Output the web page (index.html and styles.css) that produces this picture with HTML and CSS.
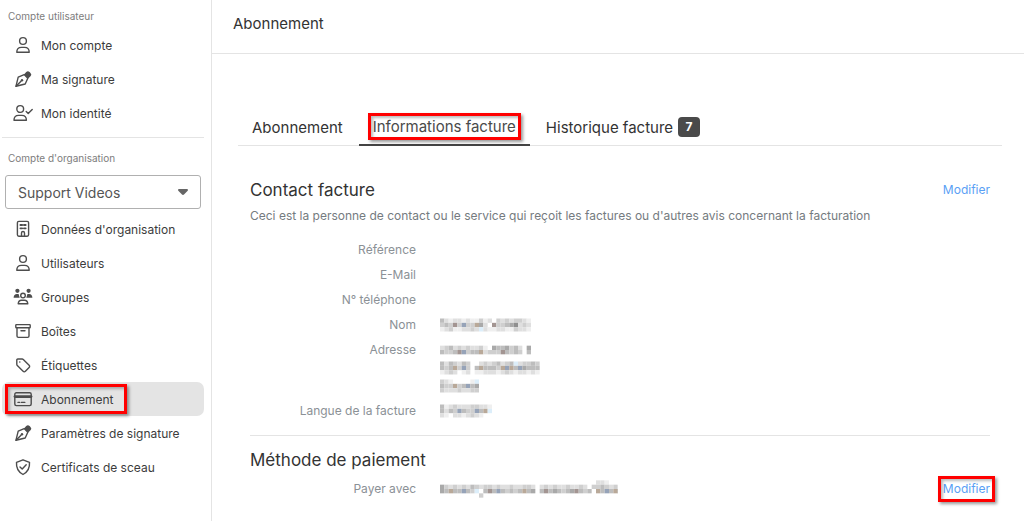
FILE: index.html
```html
<!DOCTYPE html>
<html lang="fr">
<head>
<meta charset="utf-8">
<meta name="viewport" content="width=device-width, initial-scale=1">
<title>Abonnement</title>
<link rel="stylesheet" href="styles.css">
</head>
<body>
<svg class="sprite" aria-hidden="true">
  <symbol id="i-user" viewBox="0 0 20 20"><circle cx="10" cy="6" r="3.4"/><path d="M3.8 17.3c0-3 2-4.9 4.6-4.9h3.2c2.6 0 4.6 1.9 4.6 4.9z"/></symbol>
  <symbol id="i-pen" viewBox="0 0 20 20"><path d="M3 17.2 5.2 8.2 11.2 5.600 14.800 9.200 12.200 15z"/><path d="M3 17.2 8 12.2"/><circle class="solid" cx="9" cy="11.2" r="1.2"/><path class="solid" d="M11 5.400 13.200 3a2.400 2.400 0 0 1 3.400 0l.9.9a2.400 2.400 0 0 1 0 3.400l-2.300 2.300z"/></symbol>
  <symbol id="i-usercheck" viewBox="0 0 20 20"><circle cx="7.2" cy="6" r="3.4"/><path d="M1 17.3c0-3 2-4.9 4.6-4.9h3.2c2.6 0 4.6 1.9 4.6 4.9z"/><path d="m13.2 8.6 2 2 4-4.2"/></symbol>
  <symbol id="i-building" viewBox="0 0 20 20"><rect x="4.400" y="2.400" width="11.200" height="14.800" rx="1.4"/><path d="M7.4 6h1.8M10.9 6h1.8M7.4 9.3h1.8M10.9 9.3h1.8" stroke-width="1.8"/><path d="M8.5 17v-3a1.5 1.5 0 0 1 3 0v3"/></symbol>
  <symbol id="i-group" viewBox="0 0 20 20"><circle class="solid" cx="4.4" cy="3.800" r="2.100"/><circle class="solid" cx="15.6" cy="3.800" r="2.100"/><path class="solid" d="M.6 10.800C.6 8.400 2 7 3.800 7h1.8l1.100 3.800zM19.400 10.800c0-2.400-1.400-3.800-3.200-3.800h-1.800l-1.100 3.800z"/><circle cx="10" cy="8.6" r="2.3"/><path d="M5.2 16.8c.3-2.4 1.6-3.5 3.2-3.5h3.2c1.6 0 2.9 1.1 3.2 3.5z"/></symbol>
  <symbol id="i-box" viewBox="0 0 20 20"><rect x="2.8" y="3.6" width="14.4" height="3.2" rx=".6"/><path d="M4 7v8a1.4 1.4 0 0 0 1.4 1.4h9.2A1.4 1.4 0 0 0 16 15V7M8 9.8h4"/></symbol>
  <symbol id="i-tag" viewBox="0 0 20 20"><path d="M3.8 5v4.3c0 .5.2.9.5 1.2l5.8 5.8c.7.7 1.6.7 2.3 0l3.7-3.7c.7-.7.7-1.6 0-2.3L10.300 4.500c-.3-.3-.7-.5-1.200-.5H4.800a1 1 0 0 0-1 1z"/><circle class="solid" cx="6.800" cy="7" r=".8"/></symbol>
  <symbol id="i-card" viewBox="0 0 20 20"><rect x="1.800" y="3.800" width="16.400" height="12.800" rx="1.500"/><path d="M2 7.600h16" stroke-width="2.800"/><path d="M5 13.400h1.600M8.400 13.400h3.400"/></symbol>
  <symbol id="i-shield" viewBox="0 0 20 20"><path d="m10 2.800 6.500 2.500c.4 5.400-1.900 9.800-6.500 12.200C5.400 15.100 3.100 10.700 3.500 5.300z"/><path d="m7 9.900 2.200 2.200 4-4.300"/></symbol>
</svg>
<div class="layout">
  <aside class="sidebar">
    <h2 class="group-title">Compte utilisateur</h2>
    <nav class="menu" aria-label="Compte utilisateur">
      <a class="item" href="#"><svg class="icon"><use href="#i-user"/></svg>Mon compte</a>
      <a class="item" href="#"><svg class="icon"><use href="#i-pen"/></svg>Ma signature</a>
      <a class="item" href="#"><svg class="icon"><use href="#i-usercheck"/></svg>Mon identité</a>
    </nav>
    <hr class="rule">
    <h2 class="group-title"><label for="org">Compte d'organisation</label></h2>
    <div class="picker">
      <select id="org" class="picker-select"><option>Support Videos</option></select>
      <svg class="picker-arrow" viewBox="0 0 10 6" aria-hidden="true"><path d="M1 0h8a1 1 0 0 1 .7 1.700L6 5.500a1.400 1.400 0 0 1-2 0L.3 1.700A1 1 0 0 1 1 0z"/></svg>
    </div>
    <nav class="menu" aria-label="Compte d'organisation">
      <a class="item" href="#"><svg class="icon"><use href="#i-building"/></svg>Données d'organisation</a>
      <a class="item" href="#"><svg class="icon"><use href="#i-user"/></svg>Utilisateurs</a>
      <a class="item" href="#"><svg class="icon"><use href="#i-group"/></svg>Groupes</a>
      <a class="item" href="#"><svg class="icon"><use href="#i-box"/></svg>Boîtes</a>
      <a class="item" href="#"><svg class="icon"><use href="#i-tag"/></svg>Étiquettes</a>
      <a class="item active" href="#" aria-current="page"><span class="item-body marked"><svg class="icon"><use href="#i-card"/></svg>Abonnement</span></a>
      <a class="item" href="#"><svg class="icon"><use href="#i-pen"/></svg>Paramètres de signature</a>
      <a class="item" href="#"><svg class="icon"><use href="#i-shield"/></svg>Certificats de sceau</a>
    </nav>
  </aside>
  <main class="main">
    <header class="topbar"><h1 class="page-title">Abonnement</h1></header>
    <div class="content">
      <nav class="tabs" aria-label="Sections">
        <a class="tab" href="#">Abonnement</a>
        <a class="tab current" href="#" aria-current="true"><span class="marked">Informations facture</span></a>
        <a class="tab" href="#">Historique facture <span class="badge">7</span></a>
      </nav>
      <section class="block">
        <div class="block-head"><h2 class="block-title">Contact facture</h2><a class="edit" href="#">Modifier</a></div>
        <p class="intro">Ceci est la personne de contact ou le service qui reçoit les factures ou d'autres avis concernant la facturation</p>
        <dl class="fields">
          <dt>Référence</dt><dd></dd>
          <dt>E-Mail</dt><dd></dd>
          <dt>N° téléphone</dt><dd></dd>
          <dt>Nom</dt><dd><svg class="mosaic" data-rows="dbabbabaacab.cbcbccba/cdcrcuccteb.rccdefbcb/abcaabbcbsbaabbaacbba"></svg></dd>
          <dt>Adresse</dt><dd><svg class="mosaic" data-rows="bcdbcbcbbca.eddecdb.e/dccdrucddtbcccrdcdc.d"></svg><svg class="mosaic" data-rows="dbdcbdc..bcbcdbcdsbccdc/dcdtcuc.dtdddctutdueddd/abcb.ab.aabbbabcbabbaba"></svg><svg class="mosaic" data-rows="cba....as/dcctcdude/cbbbcbbcc"></svg></dd>
          <dt>Langue de la facture</dt><dd><svg class="mosaic" data-rows="dabcbbbccbba/dbdcudccudts/ba.bbabcba.."></svg></dd>
        </dl>
      </section>
      <section class="block">
        <h2 class="block-title">Méthode de paiement</h2>
        <div class="pay-row">
          <dl class="fields"><dt>Payer avec</dt><dd><svg class="mosaic" data-rows="....................................bba../ecbcbcbdcbccbcbbcbbccb.bcbcbbcbbcb.ccdcbc/edtddudcs.drdudcdcdtde.drdedcderdcd.tdudte/.........c..............................."></svg></dd></dl>
          <a class="edit marked" href="#">Modifier</a>
        </div>
      </section>
    </div>
  </main>
</div>
<script src="mosaic.js"></script>
</body>
</html>
```
FILE: styles.css
```css
* { box-sizing: border-box; }
body { margin: 0; font-family: Inter, "Liberation Sans", sans-serif; font-size: 12px; color: #333; background: #fff; }
a { color: inherit; text-decoration: none; }
h1, h2, p, dl, dd { margin: 0; font-weight: 400; }
.sprite { display: none; }
.layout { display: grid; grid-template-columns: 212px minmax(0, 1fr); min-height: 100vh; }

.sidebar { border-right: 1px solid #e4e4e4; padding-top: 4px; }
.group-title { padding: 0 8px; font-size: 10px; line-height: 24px; color: #7d7d7d; }
.menu { display: flex; flex-direction: column; padding: 0 7px 0 2px; }
.item { display: flex; align-items: center; height: 34px; padding-left: 11px; border-radius: 7px; color: #3c3c3c; }
.item-body { display: flex; align-items: center; }
.active { background: #e4e4e4; }
.icon { width: 20px; height: 20px; margin-right: 8px; fill: none; stroke: #4d4d4d; stroke-width: 1.4; stroke-linejoin: round; stroke-linecap: round; flex: none; }
.solid { fill: #4d4d4d; stroke: none; }
.rule { border: 0; border-top: 1px solid #e4e4e4; margin: 7px 7px 8px 2px; }
.picker { display: grid; align-items: center; margin: 5px 10px 3px 5px; }
.picker-select { grid-area: 1 / 1; width: 100%; height: 34px; padding: 0 12px; border: 1px solid #b0b0b0; border-radius: 3px; background: #fff; color: #555; font-family: inherit; font-size: 14px; appearance: none; }
.picker-arrow { grid-area: 1 / 1; justify-self: end; width: 10px; height: 6px; margin-right: 13px; fill: #666; pointer-events: none; }

.topbar { height: 54px; padding: 0 21px; border-bottom: 1px solid #e4e4e4; }
.page-title { font-size: 15px; line-height: 48px; }
.content { padding: 54px 22px 0 26px; }
.tabs { display: flex; gap: 2px; border-bottom: 1px solid #e4e4e4; }
.tab { display: flex; align-items: center; gap: 5px; height: 38px; padding: 0 14px; margin-bottom: -1px; font-size: 15px; }
.current { border-bottom: 2px solid #444; color: #4a4a4a; }
.badge { min-width: 22px; border-radius: 4px; background: #4a4a4a; color: #fff; font-size: 12px; font-weight: 700; line-height: 20px; text-align: center; }

.block { margin: 0 12px; padding-top: 12px; }
.block + .block { margin-top: 15px; border-top: 1px solid #e4e4e4; }
.block-head { display: flex; align-items: center; justify-content: space-between; margin-top: 20px; }
.block-title { font-size: 17px; line-height: 24px; }
.edit { color: #5a9ff5; line-height: 18px; }
.intro { margin-top: 5px; line-height: 18px; color: #757b80; }
.fields { display: grid; grid-template-columns: 166px minmax(0, 1fr); column-gap: 24px; row-gap: 7px; line-height: 18px; color: #8b9196; }
.intro + .fields { margin-top: 16px; }
.fields dt { text-align: right; }
.pay-row { display: grid; grid-template-columns: minmax(0, 1fr) auto; margin-top: 8px; }
.mosaic { display: block; height: 18px; }

.marked { position: relative; }
.marked::after { content: ""; position: absolute; inset: -4px -5px; border: 3px solid #f00; box-shadow: 2px 2px 3px #0006, inset 2px 2px 3px #0004; pointer-events: none; }
.item-body.marked::after { inset: -5px -13px -5px -8px; }
```
FILE: mosaic.js
```js
// Draws masked values as blocks of colour, one letter per cell.
const palette = {
  a: "#efefef", b: "#dfdfdf", c: "#cfcfcf", d: "#bdbdbd", e: "#a9a9a9", f: "#8f8f8f",
  t: "#b9a999", u: "#96a3b8", r: "#a39592", s: "#dceefa"
};
const cell = 13 / 3;
document.querySelectorAll(".mosaic").forEach((svg) => {
  const rows = svg.dataset.rows.split("/");
  const width = Math.ceil(rows[0].length * cell);
  svg.setAttribute("width", width);
  svg.setAttribute("viewBox", `0 0 ${width} 18`);
  const top = (18 - rows.length * cell) / 2;
  rows.forEach((row, y) => [...row].forEach((key, x) => {
    if (!palette[key]) return;
    const rect = document.createElementNS("http://www.w3.org/2000/svg", "rect");
    rect.setAttribute("x", x * cell);
    rect.setAttribute("y", top + y * cell);
    rect.setAttribute("width", cell);
    rect.setAttribute("height", cell);
    rect.setAttribute("fill", palette[key]);
    svg.append(rect);
  }));
});
```
